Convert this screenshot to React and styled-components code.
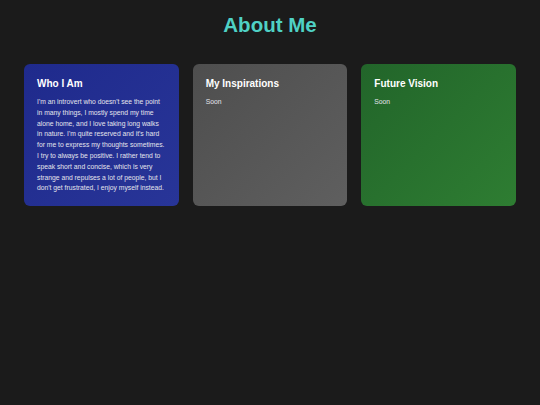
import React from "react";
import styled, { createGlobalStyle } from "styled-components";

const Global = createGlobalStyle`
  html, body {
    margin: 0;
    padding: 0;
    background: #1b1b1b;
    font-family: "Liberation Sans", Arial, sans-serif;
  }
`;

const Page = styled.div`
  min-height: 405px;
  padding: 12px 24px 0;
  box-sizing: border-box;
`;

const Title = styled.h1`
  margin: 0;
  text-align: center;
  color: #4fd1c5;
  font-size: 20.5px;
  font-weight: 700;
  line-height: 26px;
`;

const Grid = styled.div`
  display: grid;
  grid-template-columns: repeat(3, 1fr);
  gap: 14px;
  margin-top: 26px;
`;

const Card = styled.div`
  background: ${(props) => props.bg};
  border-radius: 6px;
  padding: 13px 13px 0;
  height: 142px;
  box-sizing: border-box;
`;

const CardTitle = styled.h2`
  margin: 0 0 6px;
  color: #ffffff;
  font-size: 10px;
  font-weight: 700;
  line-height: 14px;
`;

const Text = styled.p`
  margin: 0;
  color: #e4e4ec;
  font-size: 6.78px;
  line-height: 10.8px;
`;

const cards = [
  {
    title: "Who I Am",
    bg: "linear-gradient(135deg, #1f2a8c 0%, #283598 100%)",
    text:
      "I'm an introvert who doesn't see the point in many things, I mostly spend my time alone home, and I love taking long walks in nature. I'm quite reserved and it's hard for me to express my thoughts sometimes. I try to always be positive. I rather tend to speak short and concise, which is very strange and repulses a lot of people, but I don't get frustrated, I enjoy myself instead.",
  },
  {
    title: "My Inspirations",
    bg: "linear-gradient(135deg, #4e4e4e 0%, #5f5f5f 100%)",
    text: "Soon",
  },
  {
    title: "Future Vision",
    bg: "linear-gradient(135deg, #22652a 0%, #2e7d32 100%)",
    text: "Soon",
  },
];

const App = () => {
  return (
    <Page>
      <Global />
      <Title>About Me</Title>
      <Grid>
        {cards.map((c) => (
          <Card key={c.title} bg={c.bg}>
            <CardTitle>{c.title}</CardTitle>
            <Text>{c.text}</Text>
          </Card>
        ))}
      </Grid>
    </Page>
  );
};

export default App;
